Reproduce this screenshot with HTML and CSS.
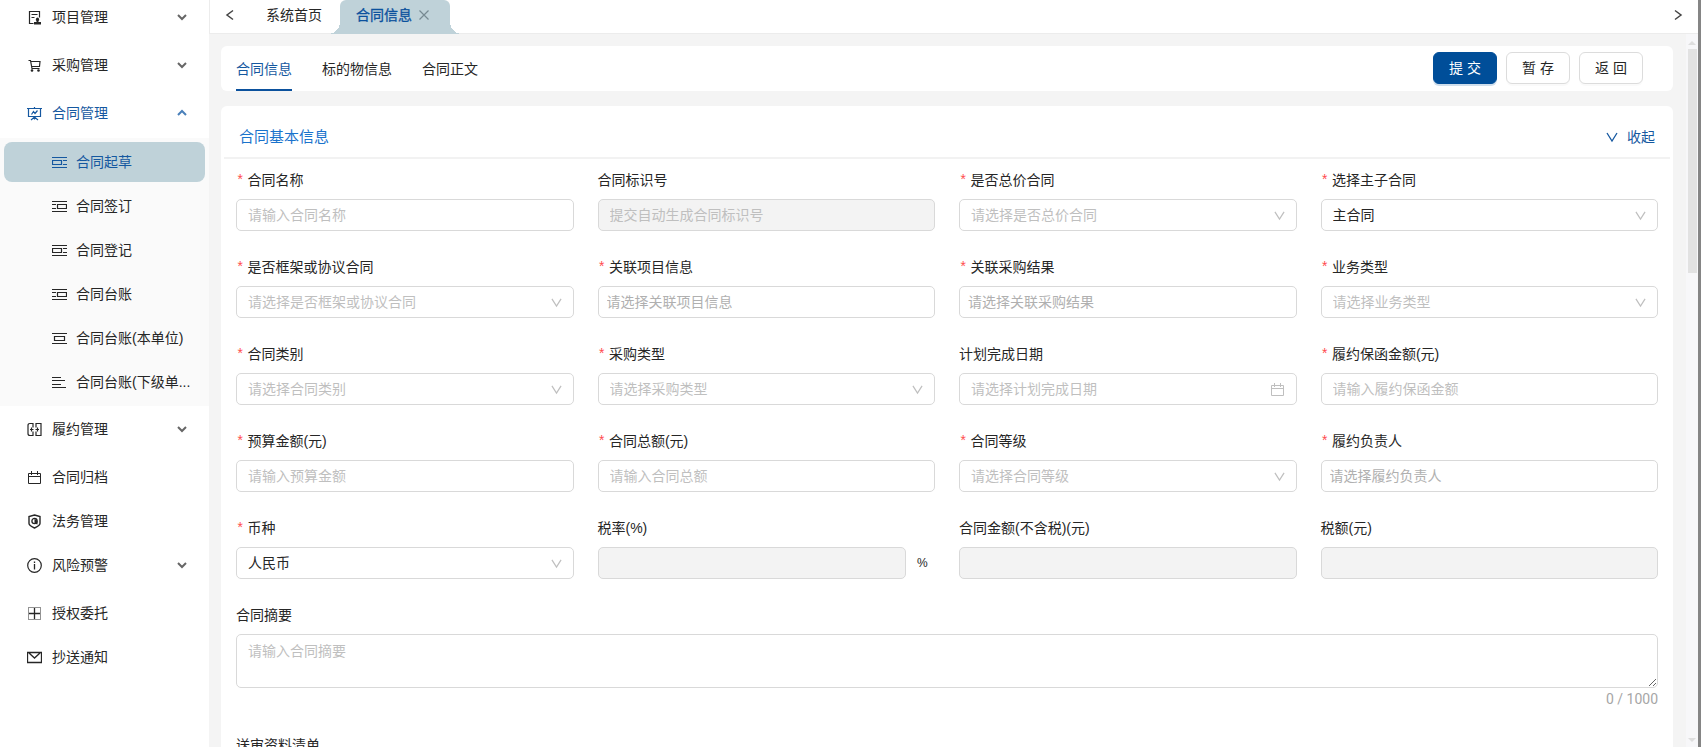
FILE: index.html
```html
<!DOCTYPE html>
<html lang="zh-CN">
<head>
<meta charset="utf-8">
<title>合同信息</title>
<link rel="stylesheet" href="styles.css">
</head>
<body>
<svg class="defs" aria-hidden="true">
  <symbol id="down" viewBox="0 0 12 12"><path d="M2 4l4 4 4-4" fill="none" stroke="currentColor" stroke-width="2"/></symbol>
  <symbol id="thin-down" viewBox="0 0 12 12"><path d="M1 2l5 8 5-8" fill="none" stroke="currentColor" stroke-width="1.300"/></symbol>
  <symbol id="cal" viewBox="0 0 15 15"><path d="M1.500 3.500h12v10h-12zM1.500 6.500h12M4.500 1v4M10.500 1v4" fill="none" stroke="currentColor"/></symbol>
  <symbol id="left-block" viewBox="0 0 15 15"><path d="M0 2.500h15M0 12.500h15M.500 5.500h9v4h-9zM11 5.500h4M11 9.500h4" fill="none" stroke="currentColor" stroke-width="1.200"/></symbol>
  <symbol id="right-block" viewBox="0 0 15 15"><path d="M0 2.500h15M0 12.500h15M5.500 5.500h9v4h-9zM0 5.500h4M0 9.500h4" fill="none" stroke="currentColor" stroke-width="1.200"/></symbol>
  <symbol id="mid-block" viewBox="0 0 15 15"><path d="M0 2.500h15M0 12.500h15M2.500 5.500h10v4h-10z" fill="none" stroke="currentColor" stroke-width="1.200"/></symbol>
  <symbol id="lines" viewBox="0 0 15 15"><path d="M0 2.500h9M0 5.500h13M0 9.500h9M0 12.500h14" fill="none" stroke="currentColor" stroke-width="1.100"/></symbol>
</svg>
<div class="app">
  <nav class="sidebar">
    <ul class="menu">
      <li class="group"><a href="#" class="item"><svg class="icon" viewBox="0 0 15 15"><path d="M6.500 13.500h-4v-12h10v6M4.500 4.500h6M4.500 7.500h3" fill="none" stroke="currentColor" stroke-width="1.200"/><path d="M10.500 7.500a2 2 0 0 1 1 3.500v1H14v2.500H7V12h2.500v-1a2 2 0 0 1 1-3.500z" fill="currentColor"/></svg><span>项目管理</span><svg class="arrow"><use href="#down"/></svg></a></li>
      <li class="group"><a href="#" class="item"><svg class="icon" viewBox="0 0 15 15"><path d="M1.500 2.500h2l1.500 8h7.500M4 3.500h9l-.500 5h-8" fill="none" stroke="currentColor" stroke-width="1.200"/><circle cx="5" cy="12.500" r="1.300" fill="currentColor"/><circle cx="11.500" cy="12.500" r="1.300" fill="currentColor"/></svg><span>采购管理</span><svg class="arrow"><use href="#down"/></svg></a></li>
      <li class="group"><a href="#" class="item current"><svg class="icon" viewBox="0 0 15 15"><path d="M0 2.500h15M1.500 2.500v8h12v-8M7.500 1v1.500M7.500 10.500v3M4 14l3.500-3 3.500 3M4.500 8.500l2-3 1.500 2 2.500-3" fill="none" stroke="currentColor" stroke-width="1.200"/></svg><span>合同管理</span><svg class="arrow up"><use href="#down"/></svg></a></li>
    </ul>
    <ul class="submenu">
      <li><a href="#" class="subitem selected"><svg class="icon"><use href="#left-block"/></svg><span>合同起草</span></a></li>
      <li><a href="#" class="subitem"><svg class="icon"><use href="#right-block"/></svg><span>合同签订</span></a></li>
      <li><a href="#" class="subitem"><svg class="icon"><use href="#left-block"/></svg><span>合同登记</span></a></li>
      <li><a href="#" class="subitem"><svg class="icon"><use href="#right-block"/></svg><span>合同台账</span></a></li>
      <li><a href="#" class="subitem"><svg class="icon"><use href="#mid-block"/></svg><span>合同台账(本单位)</span></a></li>
      <li><a href="#" class="subitem"><svg class="icon"><use href="#lines"/></svg><span>合同台账(下级单...</span></a></li>
    </ul>
    <ul class="menu-rest">
      <li class="group"><a href="#" class="item"><svg class="icon" viewBox="0 0 15 15"><path d="M6 1.500H3q-2 0-2 2v8q0 2 2 2h3M9 1.500h5v12H9M6 1v4.500M6 9.500V14M9 1v4.500M9 9.500V14M3 7.500h3.500M8.500 7.500H12M4.500 5.500v4M10.500 5.500v4" fill="none" stroke="currentColor" stroke-width="1.200"/></svg><span>履约管理</span><svg class="arrow"><use href="#down"/></svg></a></li>
      <li class="leaf"><a href="#" class="item"><svg class="icon"><use href="#cal"/></svg><span>合同归档</span></a></li>
      <li class="leaf"><a href="#" class="item"><svg class="icon" viewBox="0 0 15 15"><path d="M7.500 1 13 2.500v7q0 2-5.500 4.500Q2 11.500 2 9.500v-7z" fill="none" stroke="currentColor" stroke-width="1.400"/><circle cx="7.500" cy="7" r="2.600" fill="none" stroke="currentColor" stroke-width="1.300"/><path d="M7.500 4.500v5l3 1V7z" fill="currentColor"/></svg><span>法务管理</span></a></li>
      <li class="group"><a href="#" class="item"><svg class="icon" viewBox="0 0 15 15"><circle cx="7.500" cy="7.500" r="6.800" fill="none" stroke="currentColor" stroke-width="1.200"/><path d="M7.500 6v5.500M7.500 3.500V5" stroke="currentColor" stroke-width="1.300"/></svg><span>风险预警</span><svg class="arrow"><use href="#down"/></svg></a></li>
      <li class="leaf"><a href="#" class="item"><svg class="icon" viewBox="0 0 15 15"><path d="M7.500 2v11M2 7.500h11" stroke="currentColor" stroke-width="1.300"/><path d="M1.500 1.500h12v12h-12z" fill="none" stroke="currentColor" stroke-dasharray="1 1"/></svg><span>授权委托</span></a></li>
      <li class="leaf"><a href="#" class="item"><svg class="icon" viewBox="0 0 15 15"><path d="M.500 2.500h14v10H.500zM2 3l5.500 5L13 3" fill="none" stroke="currentColor" stroke-width="1.300"/></svg><span>抄送通知</span></a></li>
    </ul>
  </nav>
  <div class="main">
    <header class="tabbar">
      <button class="nav-btn" aria-label="向左"><svg class="nav-icon" viewBox="0 0 12 12"><path d="M9 1.500 3 6l6 4.500" fill="none" stroke="currentColor" stroke-width="1.500"/></svg></button>
      <a href="#" class="page-tab">系统首页</a>
      <a href="#" class="page-tab active">合同信息<svg class="close" viewBox="0 0 12 12"><path d="M1.500 1.500l9 9M10.500 1.500l-9 9" stroke="currentColor" stroke-width="1.200"/></svg></a>
      <button class="nav-btn last" aria-label="向右"><svg class="nav-icon" viewBox="0 0 12 12"><path d="M3 1.500 9 6l-6 4.500" fill="none" stroke="currentColor" stroke-width="1.500"/></svg></button>
    </header>
    <div class="body">
      <main class="content">
        <section class="card toolbar">
          <div class="tabs"><a href="#" class="tab on">合同信息</a><a href="#" class="tab">标的物信息</a><a href="#" class="tab">合同正文</a></div>
          <div class="actions"><button class="btn primary">提 交</button><button class="btn">暂 存</button><button class="btn">返 回</button></div>
        </section>
        <section class="card panel">
          <div class="panel-head"><h2 class="title">合同基本信息</h2><button class="fold"><svg class="fold-icon"><use href="#thin-down"/></svg>收起</button></div>
          <form class="form">
            <div class="field"><label class="label req" for="f1">合同名称</label><input class="control" id="f1" placeholder="请输入合同名称"></div>
            <div class="field"><label class="label" for="f2">合同标识号</label><input class="control" id="f2" placeholder="提交自动生成合同标识号" disabled></div>
            <div class="field"><label class="label req" for="f3">是否总价合同</label><div class="pick"><select class="control empty" id="f3"><option>请选择是否总价合同</option></select><svg class="mark"><use href="#thin-down"/></svg></div></div>
            <div class="field"><label class="label req" for="f4">选择主子合同</label><div class="pick"><select class="control" id="f4"><option>主合同</option></select><svg class="mark"><use href="#thin-down"/></svg></div></div>

            <div class="field"><label class="label req" for="f5">是否框架或协议合同</label><div class="pick"><select class="control empty" id="f5"><option>请选择是否框架或协议合同</option></select><svg class="mark"><use href="#thin-down"/></svg></div></div>
            <div class="field"><label class="label req" for="f6">关联项目信息</label><input class="control lookup" id="f6" placeholder="请选择关联项目信息"></div>
            <div class="field"><label class="label req" for="f7">关联采购结果</label><input class="control lookup" id="f7" placeholder="请选择关联采购结果"></div>
            <div class="field"><label class="label req" for="f8">业务类型</label><div class="pick"><select class="control empty" id="f8"><option>请选择业务类型</option></select><svg class="mark"><use href="#thin-down"/></svg></div></div>

            <div class="field"><label class="label req" for="f9">合同类别</label><div class="pick"><select class="control empty" id="f9"><option>请选择合同类别</option></select><svg class="mark"><use href="#thin-down"/></svg></div></div>
            <div class="field"><label class="label req" for="f10">采购类型</label><div class="pick"><select class="control empty" id="f10"><option>请选择采购类型</option></select><svg class="mark"><use href="#thin-down"/></svg></div></div>
            <div class="field"><label class="label" for="f11">计划完成日期</label><div class="pick"><input class="control" id="f11" placeholder="请选择计划完成日期"><svg class="mark date"><use href="#cal"/></svg></div></div>
            <div class="field"><label class="label req" for="f12">履约保函金额(元)</label><input class="control" id="f12" placeholder="请输入履约保函金额"></div>

            <div class="field"><label class="label req" for="f13">预算金额(元)</label><input class="control" id="f13" placeholder="请输入预算金额"></div>
            <div class="field"><label class="label req" for="f14">合同总额(元)</label><input class="control" id="f14" placeholder="请输入合同总额"></div>
            <div class="field"><label class="label req" for="f15">合同等级</label><div class="pick"><select class="control empty" id="f15"><option>请选择合同等级</option></select><svg class="mark"><use href="#thin-down"/></svg></div></div>
            <div class="field"><label class="label req" for="f16">履约负责人</label><input class="control lookup" id="f16" placeholder="请选择履约负责人"></div>

            <div class="field"><label class="label req" for="f17">币种</label><div class="pick"><select class="control" id="f17"><option>人民币</option></select><svg class="mark"><use href="#thin-down"/></svg></div></div>
            <div class="field"><label class="label" for="f18">税率(%)</label><div class="with-unit"><input class="control" id="f18" disabled><span class="unit">%</span></div></div>
            <div class="field"><label class="label" for="f19">合同金额(不含税)(元)</label><input class="control" id="f19" disabled></div>
            <div class="field"><label class="label" for="f20">税额(元)</label><input class="control" id="f20" disabled></div>

            <div class="field wide"><label class="label" for="f21">合同摘要</label><textarea class="control area" id="f21" placeholder="请输入合同摘要"></textarea><span class="count">0 / 1000</span></div>
            <div class="field wide"><span class="label">送审资料清单</span></div>
          </form>
        </section>
      </main>
      <div class="scrollbar" aria-hidden="true"><i class="tri tri-up"></i><i class="thumb"></i><i class="tri tri-down"></i></div>
    </div>
  </div>
  <div class="edge"></div>
</div>
</body>
</html>
```
FILE: styles.css
```css
* { box-sizing: border-box; }
body {
  margin: 0;
  font: 14px/22px "Liberation Sans", "Noto Sans CJK SC", sans-serif;
  color: #262626;
  background: #fff;
}
a { color: inherit; text-decoration: none; }
ul { list-style: none; margin: 0; padding: 0; }
button, input, select, textarea { font: inherit; color: inherit; }
button { cursor: pointer; }
svg { display: block; flex: none; }
.defs { position: absolute; width: 0; height: 0; }

.app { display: flex; height: 100vh; overflow: hidden; }

/* Sidebar */
.sidebar { flex: none; width: 209px; display: flex; flex-direction: column; justify-content: flex-start; }
.menu { margin-top: -6px; }
.group { padding: 3px 0 5px; }
.leaf { padding: 3px 0 1px; }
.item { display: flex; align-items: center; height: 40px; padding: 0 21px 0 27px; }
.item span { flex: 1; margin-left: 10px; }
.icon { width: 15px; height: 15px; }
.arrow { width: 12px; height: 12px; color: #666; }
.arrow.up { transform: rotate(180deg); color: #4a80ba; }
.current { color: #1558a0; }
.submenu { background: #fafafa; padding: 4px 4px 0; }
.submenu li { padding-bottom: 4px; }
.subitem { display: flex; align-items: center; gap: 9px; height: 40px; padding-left: 48px; border-radius: 8px; white-space: nowrap; }
.selected { background: #bfd2d9; color: #1558a0; }

/* Page tabs */
.main { flex: 1; min-width: 0; display: flex; flex-direction: column; background: #f4f4f4; }
.tabbar { flex: none; display: flex; align-items: flex-start; height: 34px; background: #fff; border-bottom: 1px solid #ececec; border-left: 1px solid #ececec; }
.nav-btn { width: 40px; height: 30px; padding: 0; border: 0; background: none; display: grid; place-items: center; color: #444; }
.nav-btn.last { margin-left: auto; }
.nav-icon { width: 12px; height: 12px; }
.page-tab { display: flex; align-items: center; height: 34px; padding: 0 18px 4px 16px; }
.page-tab.active { position: relative; gap: 6px; padding: 0 20px 4px 16px; background: #bfd2d9; color: #0b519d; border-radius: 6px 6px 0 0; -webkit-text-stroke: 0.3px; }
.active::before, .active::after { content: ""; position: absolute; bottom: 0; width: 12px; height: 12px; }
.active::before { right: 100%; background: radial-gradient(circle at 0 0, transparent 12px, #bfd2d9 12px); }
.active::after { left: 100%; background: radial-gradient(circle at 100% 0, transparent 12px, #bfd2d9 12px); }
.close { width: 12px; height: 12px; color: #778a92; }

/* Content */
.body { flex: 1; min-height: 0; display: flex; }
.content { flex: 1; min-width: 0; overflow: hidden; padding: 12px 13px 0 12px; display: flex; flex-direction: column; gap: 15px; }
.card { flex: none; background: #fff; border-radius: 6px; }
.toolbar { display: flex; justify-content: space-between; height: 45px; padding: 0 30px 0 15px; }
.tabs { display: flex; gap: 30px; }
.tab { padding: 12px 0 9px; border-bottom: 2px solid transparent; }
.tab.on { color: #1558a0; border-color: #0b519d; }
.actions { display: flex; align-items: center; gap: 9px; height: 44px; }
.btn { width: 64px; height: 32px; padding: 0; border: 1px solid #dcdcdc; border-radius: 6px; background: #fff; box-shadow: 0 2px 0 #00000005; }
.btn.primary { background: #004e99; border-color: #004e99; color: #fff; box-shadow: 0 2px 0 #004e9930; }
.panel-head { display: flex; align-items: center; justify-content: space-between; height: 53px; margin: 0 3px; padding: 10px 15px 0; border-bottom: 2px solid #f2f2f2; }
.title { margin: 0; font-size: 15px; font-weight: 400; color: #1a73cc; }
.fold { display: flex; align-items: center; gap: 9px; padding: 0; border: 0; background: none; color: #1558a0; }
.fold-icon { width: 12px; height: 12px; }
.form { display: grid; grid-template-columns: repeat(4, minmax(0, 1fr)); gap: 25px 24px; padding: 10px 15px 40px; }
.field { display: flex; flex-direction: column; gap: 8px; }
.label { height: 22px; white-space: nowrap; }
.req::before { content: "*"; color: #ff4d4f; font-family: "Liberation Mono", monospace; margin-right: 3px; }
.control { width: 100%; height: 32px; padding: 0 11px; border: 1px solid #d9d9d9; border-radius: 5px; background: #fff; outline: 0; }
.control::placeholder { color: #bfbfbf; opacity: 1; }
.control:disabled { background: #f3f3f3; }
.control.lookup { padding: 0 8px; }
.lookup::placeholder { color: #b0b0b0; }
.pick { display: grid; align-items: center; }
.pick > * { grid-area: 1 / 1; }
select.control { appearance: none; }
.empty { color: #bfbfbf; }
.mark { justify-self: end; width: 11px; height: 11px; margin-right: 12px; color: #bfbfbf; pointer-events: none; }
.mark.date { width: 15px; height: 15px; }
.with-unit { display: flex; align-items: center; gap: 11px; }
.with-unit .control { flex: 1; min-width: 0; }
.unit { width: 18px; font-size: 12px; }
.wide { grid-column: 1 / -1; }
.area { display: block; height: 54px; padding: 5px 11px; resize: vertical; }
.count { align-self: flex-end; margin: -8px 0 -1px; color: #a6a6a6; font-family: Roboto, sans-serif; }

/* Scroll indicator */
.scrollbar { flex: none; width: 12px; display: flex; flex-direction: column; align-items: center; padding: 7px 1px 5px; background: #f7f7f9; }
.tri { border: 4px solid transparent; }
.tri-up { border-top: 0; border-bottom-color: #dedede; }
.tri-down { border-bottom: 0; border-top-color: #dedede; margin-top: auto; }
.thumb { width: 9px; height: 32%; margin-top: 4px; background: #e2e2e2; }
.edge { flex: none; width: 3px; background: #858585; }
```
